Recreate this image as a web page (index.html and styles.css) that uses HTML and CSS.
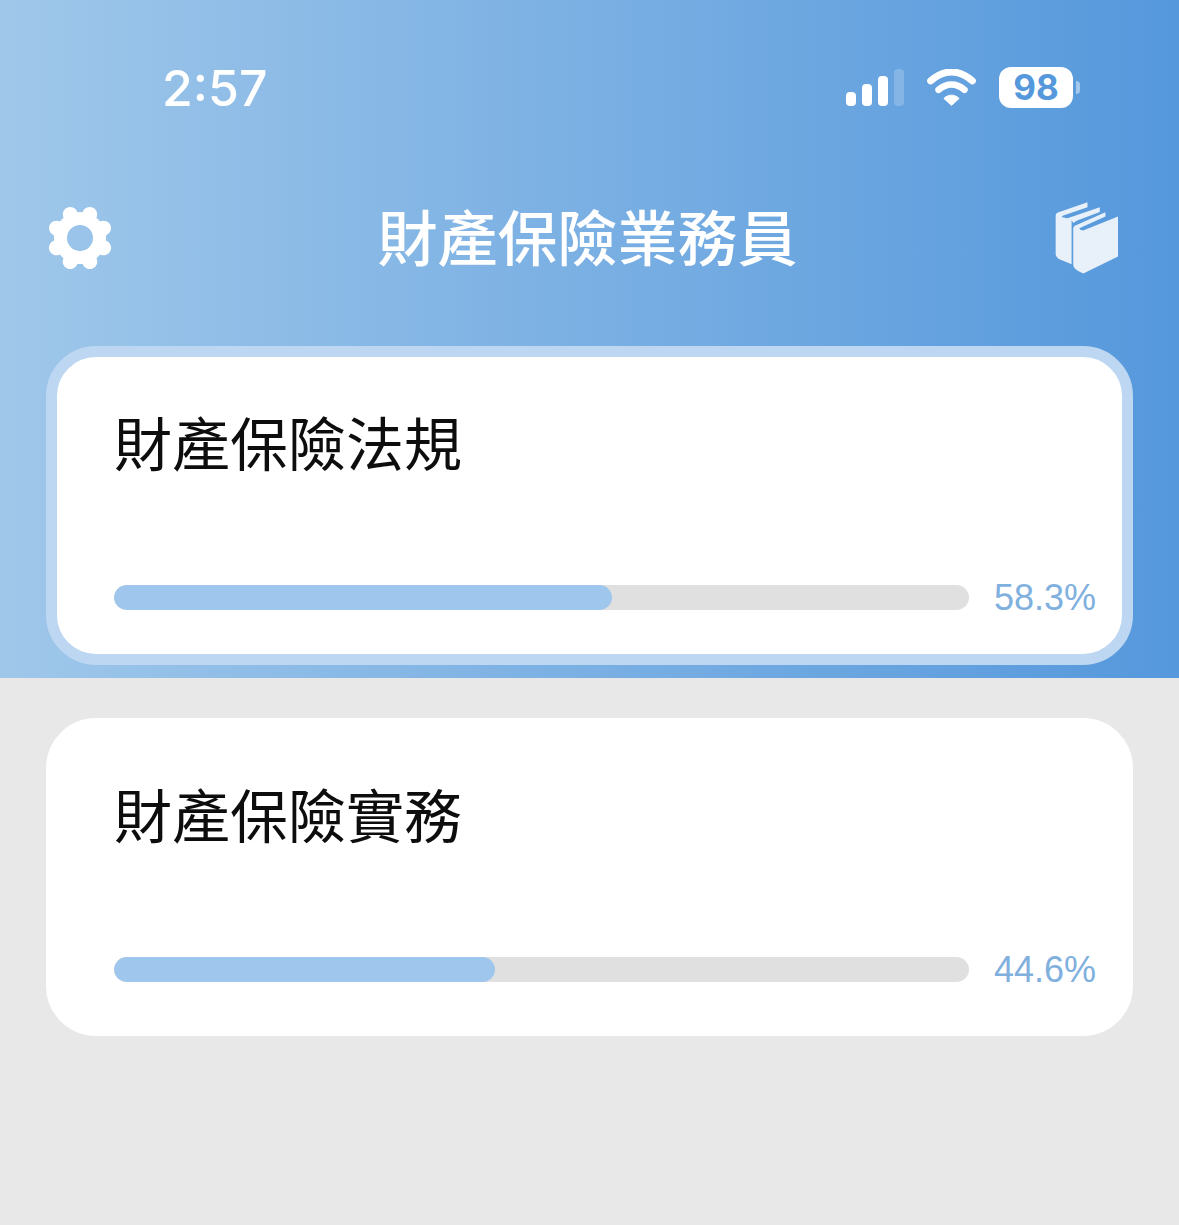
FILE: index.html
```html
<!DOCTYPE html>
<html lang="zh-Hant">
<head>
<meta charset="utf-8">
<title>財產保險業務員</title>
<link rel="stylesheet" href="styles.css">
</head>
<body>
<header class="hero">
  <div class="status">
    <span class="time">2:57</span>
    <div class="status-icons">
      <svg class="signal" width="58" height="37" viewBox="0 0 58 37">
        <rect x="0" y="23" width="10" height="14" rx="4" fill="#fff"/>
        <rect x="16" y="15" width="10" height="22" rx="4" fill="#fff"/>
        <rect x="32" y="7" width="10" height="30" rx="4" fill="#fff"/>
        <rect x="48" y="0" width="10" height="37" rx="4" fill="#fff" fill-opacity=".2"/>
      </svg>
      <svg class="wifi" width="49" height="37" viewBox="320 55 148 110">
        <path d="M331 90C371 54 417 54 457 90" fill="none" stroke="#fff" stroke-width="21" stroke-linecap="round"/>
        <path d="M355 117C380 96 408 96 433 117" fill="none" stroke="#fff" stroke-width="20" stroke-linecap="round"/>
        <path d="M371 143C384 130 404 130 417 143L394 164Z" fill="#fff" stroke="#fff" stroke-width="3" stroke-linejoin="round"/>
      </svg>
      <div class="battery">
        <span class="battery-body">98</span>
        <span class="battery-cap"></span>
      </div>
    </div>
  </div>
  <nav class="nav">
    <svg class="gear" width="68" height="68" viewBox="-34 -34 68 68">
      <circle r="19.500" fill="none" stroke="#fff" stroke-width="13"/>
      <g stroke="#fff" stroke-width="15" stroke-linecap="round">
        <line y1="-22" y2="-25.500" transform="rotate(22.500)"/>
        <line y1="-22" y2="-25.500" transform="rotate(67.500)"/>
        <line y1="-22" y2="-25.500" transform="rotate(112.500)"/>
        <line y1="-22" y2="-25.500" transform="rotate(157.500)"/>
        <line y1="-22" y2="-25.500" transform="rotate(202.500)"/>
        <line y1="-22" y2="-25.500" transform="rotate(247.500)"/>
        <line y1="-22" y2="-25.500" transform="rotate(292.500)"/>
        <line y1="-22" y2="-25.500" transform="rotate(337.500)"/>
      </g>
    </svg>
    <h1 class="nav-title">財產保險業務員</h1>
    <svg class="books" width="63" height="72" viewBox="45 35 190 215">
      <path fill="#e8f1fa" d="M47 76C47 70 50 67 56 65L143 35V50L72 74C64 77 64 80 72 81L95 88V222L62 208C52 204 47 198 47 190Z"/>
      <path fill="#e8f1fa" d="M74 86L180 50V64L112 90L100 97L96 90Z"/>
      <path fill="#e8f1fa" d="M100 115C100 108 104 105 110 103L197 65V78L125 110C117 113 117 116 124 118L130 120L235 78V198L135 247C132 249 130 249 127 248C112 242 100 234 100 222Z"/>
    </svg>
  </nav>
  <section class="card card-active">
    <h2 class="card-title">財產保險法規</h2>
    <div class="progress-row">
      <div class="track"><div class="fill" style="width:58.3%"></div></div>
      <span class="percent">58.3%</span>
    </div>
  </section>
</header>
<main class="list">
  <section class="card card-plain">
    <h2 class="card-title">財產保險實務</h2>
    <div class="progress-row">
      <div class="track"><div class="fill" style="width:44.6%"></div></div>
      <span class="percent">44.6%</span>
    </div>
  </section>
</main>
</body>
</html>
```
FILE: styles.css
```css
* { box-sizing: border-box; }
html, body { margin: 0; padding: 0; }
body {
  width: 1179px;
  height: 1225px;
  background: #e8e8e8;
  font-family: "Noto Sans CJK TC", "Liberation Sans", sans-serif;
  overflow: hidden;
}
.hero {
  height: 678px;
  padding: 0 46px;
  background: linear-gradient(90deg, #9fc7ea 0%, #5598dc 100%);
}
.status {
  height: 176px;
  display: flex;
  justify-content: space-between;
  align-items: flex-start;
  padding: 59px 53px 0 116px;
}
.time {
  font-family: Inter, "Liberation Sans", sans-serif;
  font-size: 50px;
  font-weight: 500;
  line-height: 58px;
  color: #fff;
}
.status-icons {
  display: flex;
  align-items: center;
  gap: 23px;
  padding-top: 8px;
}
.signal { display: block; }
.wifi { display: block; }
.battery { display: flex; align-items: center; gap: 3px; }
.battery-body {
  width: 74px;
  height: 41px;
  border-radius: 12px;
  background: #fff;
  color: #5598dc;
  font-family: Inter, "Liberation Sans", sans-serif;
  font-size: 35px;
  font-weight: 700;
  line-height: 41px;
  text-align: center;
}
.battery-cap {
  width: 4px;
  height: 13px;
  border-radius: 0 4px 4px 0;
  background: rgba(255, 255, 255, .45);
}
.nav {
  height: 124px;
  display: flex;
  justify-content: space-between;
  align-items: center;
  padding: 0 15px 0 0;
}
.nav-title {
  margin: 0 0 0 6px;
  padding-bottom: 6px;
  font-size: 60px;
  font-weight: 500;
  line-height: 80px;
  color: #fff;
}
.card {
  height: 319px;
  padding: 42px 26px 0 57px;
  background: #fff;
  border: 11px solid #fff;
  border-radius: 50px;
}
.card-active {
  margin-top: 46px;
  border-color: #bdd6f1;
}
.card-plain { height: 318px; }
.card-title {
  margin: 0;
  font-size: 58px;
  font-weight: 400;
  line-height: 84px;
  color: #0d0d0d;
}
.progress-row {
  display: flex;
  align-items: center;
  margin-top: 89px;
  height: 50px;
}
.track {
  width: 855px;
  height: 25px;
  border-radius: 13px;
  background: #e0e0e0;
  overflow: hidden;
}
.fill {
  height: 100%;
  border-radius: 13px;
  background: #9fc6ec;
}
.percent {
  flex: 1;
  margin-top: 2px;
  text-align: right;
  font-family: "Liberation Sans", sans-serif;
  font-size: 36px;
  color: #7fb0de;
}
.list { padding: 40px 46px 0; }
```
